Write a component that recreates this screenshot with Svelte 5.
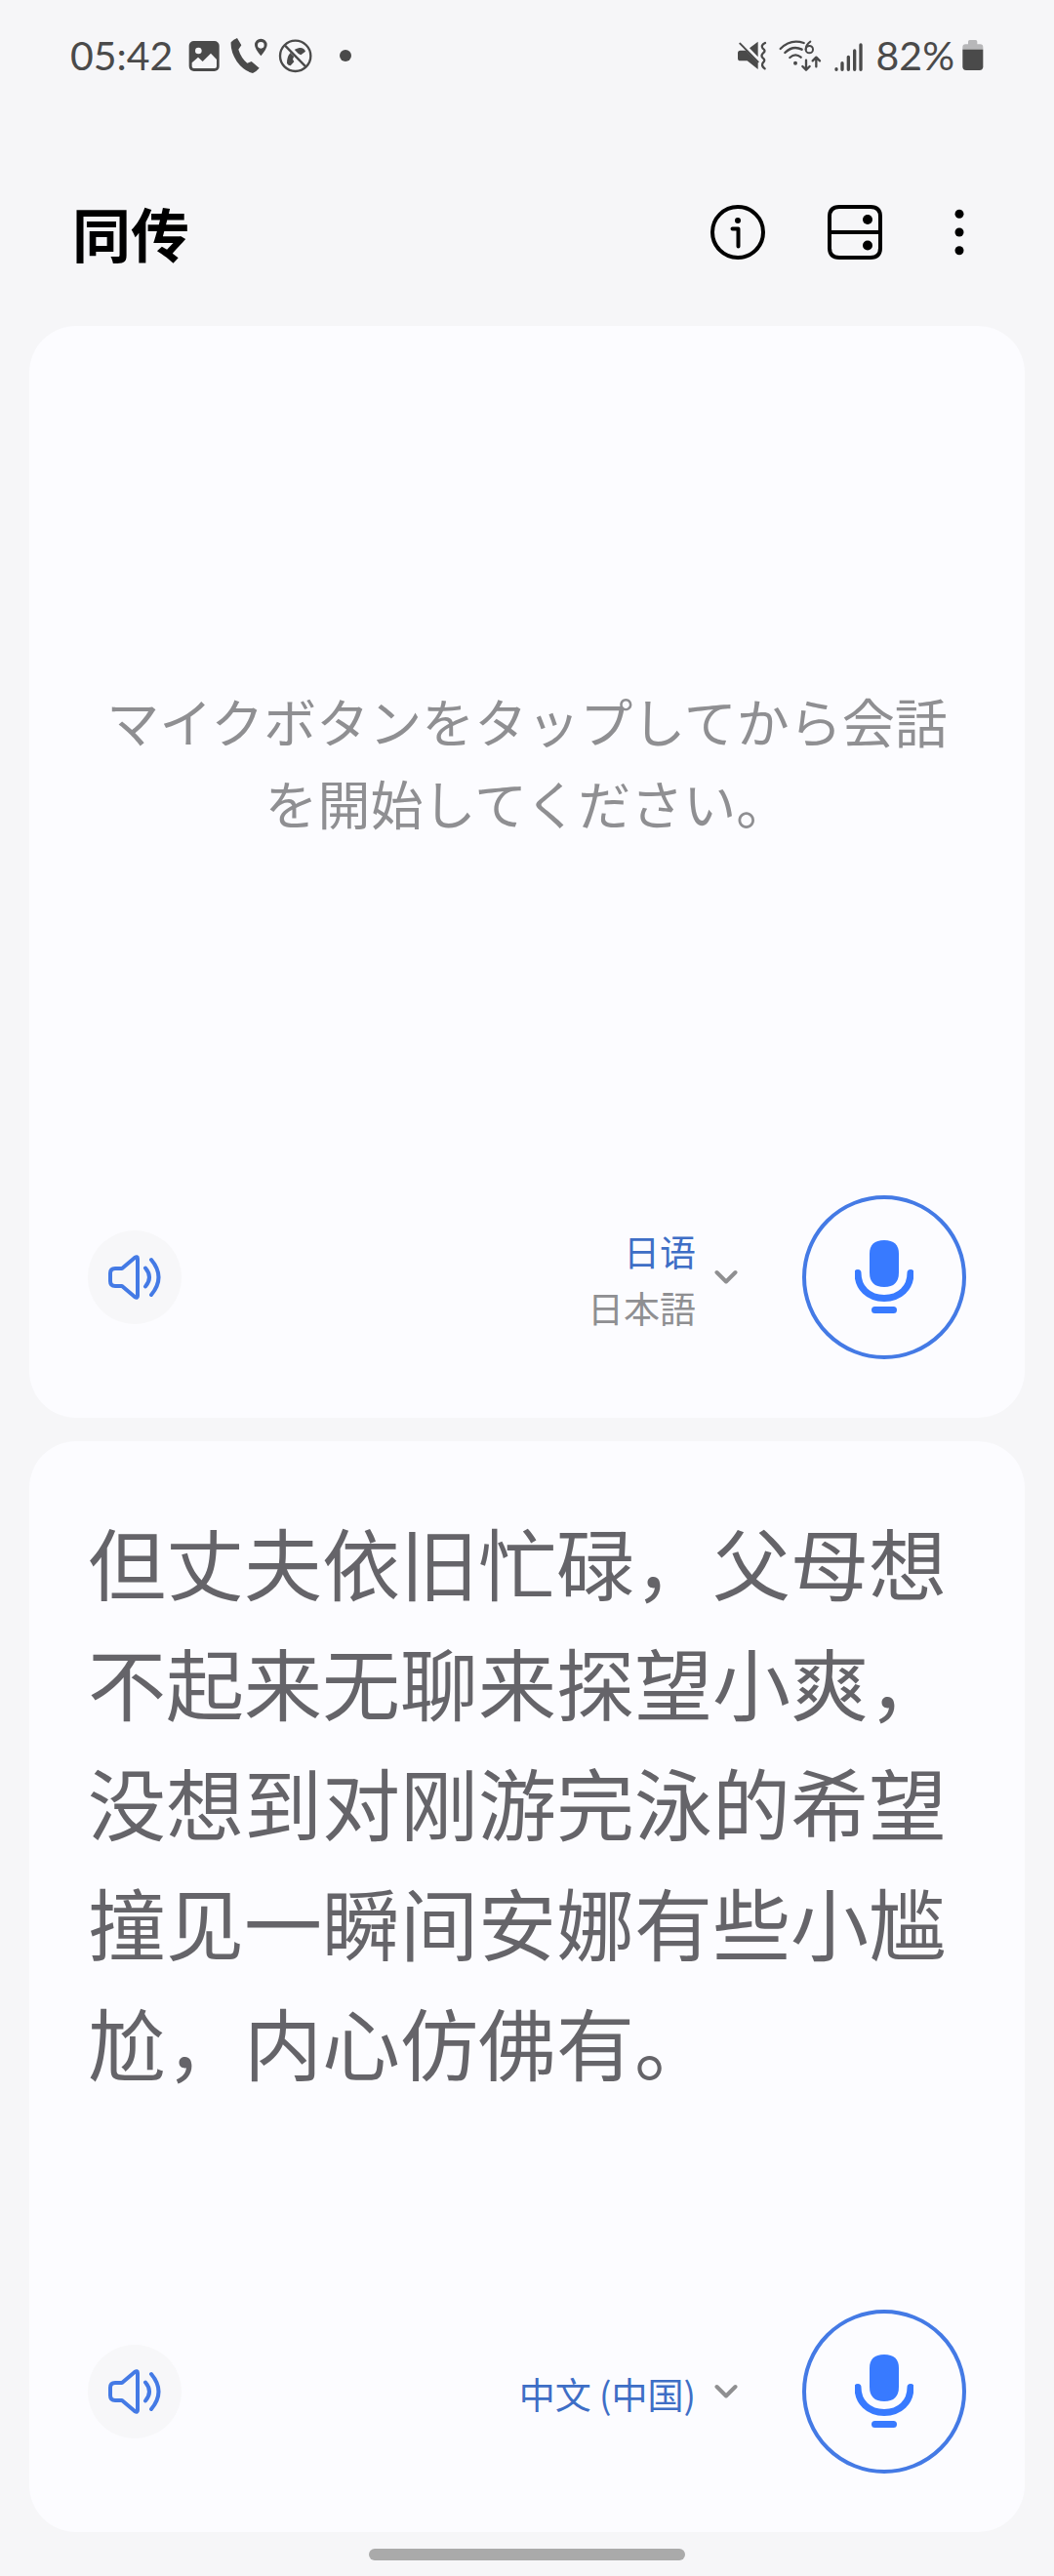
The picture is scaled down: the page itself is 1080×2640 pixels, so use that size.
<script>
    const panels = [
        {
            id: "guest",
            lang: "ja",
            text: "マイクボタンをタップしてから会話を開始してください。",
            hint: true,
            name: "日语",
            nativeName: "日本語",
        },
        {
            id: "owner",
            lang: "zh-CN",
            text: "但丈夫依旧忙碌，父母想不起来无聊来探望小爽，没想到对刚游完泳的希望撞见一瞬间安娜有些小尴尬，内心仿佛有。",
            hint: false,
            name: "中文 (中国)",
            nativeName: "",
        },
    ];

    let listening = $state("");

    const toggleMic = (id) => {
        listening = listening === id ? "" : id;
    };
</script>

<div class="screen" lang="zh-CN">
    <div class="status-bar">
        <div class="status-left">
            <span class="clock">05:42</span>
            <svg width="32" height="40" viewBox="400 51 96 120" aria-hidden="true">
                <rect x="402" y="66" width="93" height="93" rx="15" fill="currentColor" />
                <circle cx="431" cy="96" r="10" fill="#f6f6f8" />
                <path d="M411 133l19-17 14 13 25-25 18 19v21q0 6-6 6h-64q-6 0-6-6z" fill="#f6f6f8" />
            </svg>
            <svg width="40" height="40" viewBox="528 51 120 120" aria-hidden="true">
                <path d="M533 70q8-9 19-13l13 22-9 13q8 26 27 42l13-5 24 20q-9 11-20 16-28-7-49-36-20-31-18-59z" fill="currentColor" />
                <path fill-rule="evenodd" d="M625 59a19 19 0 0 1 19 19q0 11-19 34-19-23-19-34a19 19 0 0 1 19-19zm0 10a10 10 0 1 0 0 20 10 10 0 0 0 0-20z" fill="currentColor" />
            </svg>
            <svg width="36" height="40" viewBox="677 51 108 120" aria-hidden="true">
                <path d="M704 135q-1-38 38-48 14-2 19 11l-14 11-9-4q-12 4-16 17l4 8-11 12q-7 0-11-7z" fill="currentColor" />
                <path d="M700 76l66 68" stroke="#f6f6f8" stroke-width="16" />
                <circle cx="730" cy="112" r="47" fill="none" stroke="currentColor" stroke-width="7" />
                <path d="M698 80l64 65" stroke="currentColor" stroke-width="7" />
            </svg>
            <span class="more-dot"></span>
        </div>

        <div class="status-right">
            <svg width="30" height="40" viewBox="75 51 90 120" aria-hidden="true">
                <path d="M75 103q0-8 8-8h17l37 38v20l-33-26H83q-8 0-8-8zM111 88l26-20v47z" fill="currentColor" />
                <path d="M82 74l55 56" stroke="currentColor" stroke-width="6" stroke-linecap="round" />
                <path d="M159 72q-15 8-7 17 10 7 2 13-10 9-2 16 9 7 1 14-8 9 5 19" fill="none" stroke="currentColor" stroke-width="7" stroke-linecap="round" />
            </svg>
            <svg width="44" height="40" viewBox="207 51 132 120" aria-hidden="true">
                <g fill="none" stroke="currentColor" stroke-width="7" stroke-linecap="round" stroke-linejoin="round">
                    <path d="M212 90q31-32 72-18M226 102q24-24 52-10M241 117q17-15 34-1" />
                    <circle cx="301" cy="92" r="11" stroke-width="6" />
                    <path d="M304 68q-14 10-14 24" stroke-width="6" />
                    <path d="M291 125v29m-11-10l11 11 11-11M322 145v-28m-11 10l11-11 11 11" />
                </g>
                <circle cx="258" cy="134" r="6" fill="currentColor" />
            </svg>
            <svg width="32" height="40" viewBox="370 51 96 120" aria-hidden="true">
                <path d="M379 152v2M397 134v20M416 115v39M435 96v58M454 78v76" stroke="currentColor" stroke-width="10" stroke-linecap="round" />
            </svg>
            <span class="battery-level">82%</span>
            <svg width="22" height="40" viewBox="770 51 66 120" aria-hidden="true">
                <path d="M771 93v-8q0-9 9-9h8v-8q0-5 5-5h18q5 0 5 5v8h9q9 0 9 9v8z" fill="#b7b7b9" />
                <path d="M771 92h63v53q0 11-11 11h-41q-11 0-11-11z" fill="currentColor" />
            </svg>
        </div>
    </div>

    <header>
        <h1>同传</h1>
        <div class="actions">
            <button class="icon-button" aria-label="信息">
                <svg width="56" height="56" viewBox="0 0 56 56" fill="none" stroke="currentColor" stroke-linecap="round">
                    <circle cx="28" cy="28" r="26" stroke-width="4" />
                    <path d="M22.500 24.500h6v18" stroke-width="4" stroke-linejoin="round" />
                    <circle cx="28" cy="16" r="3" fill="currentColor" stroke="none" />
                </svg>
            </button>
            <button class="icon-button" aria-label="切换视图">
                <svg width="56" height="56" viewBox="0 0 56 56">
                    <path d="M2 12Q2 2 12 2h32q10 0 10 10v32q0 10-10 10H12Q2 54 2 44zM2 28h52" fill="none" stroke="currentColor" stroke-width="4" />
                    <circle cx="41" cy="15" r="5" fill="currentColor" />
                    <circle cx="41" cy="41.500" r="5" fill="currentColor" />
                </svg>
            </button>
            <button class="icon-button" aria-label="更多选项">
                <svg width="30" height="56" viewBox="0 0 30 56" fill="currentColor">
                    <circle cx="15" cy="9.300" r="4.500" />
                    <circle cx="15" cy="28" r="4.500" />
                    <circle cx="15" cy="46.700" r="4.500" />
                </svg>
            </button>
        </div>
    </header>

    <main>
        {#each panels as panel (panel.id)}
            <section class="panel">
                <div class="content" class:hint={panel.hint}>
                    <p lang={panel.lang}>{panel.text}</p>
                </div>
                <div class="controls">
                    <button class="speaker" aria-label="朗读">
                        <svg width="56" height="48" viewBox="0 0 56 48" fill="none" stroke="currentColor" stroke-width="4" stroke-linecap="round" stroke-linejoin="round">
                            <path d="M3 20q0-5 5-5h7L28 4q3-2 3 1v38q0 3-3 1L15 33H8q-5 0-5-5z" />
                            <path d="M39 14.500q8 9.500 0 19M45 6q15 18 0 36" />
                        </svg>
                    </button>
                    <button class="language" aria-haspopup="listbox">
                        <span class="names">
                            <span>{panel.name}</span>
                            {#if panel.nativeName}
                                <span class="native" lang={panel.lang}>{panel.nativeName}</span>
                            {/if}
                        </span>
                        <svg width="24" height="16" viewBox="0 0 24 16" fill="none" stroke="#8f8f91" stroke-width="4" stroke-linecap="round" stroke-linejoin="round" aria-hidden="true">
                            <path d="M2.500 3l9.500 9.500L21.500 3" />
                        </svg>
                    </button>
                    <button
                        class="mic"
                        aria-label="麦克风"
                        aria-pressed={listening === panel.id}
                        onclick={() => toggleMic(panel.id)}
                    >
                        <svg width="60" height="76" viewBox="0 0 60 76">
                            <path d="M15 14Q15 0 30 0t15 14v19q0 15-15 15T15 33z" fill="currentColor" />
                            <path d="M3 33.500C3 49 14 59.500 30 59.500S57 49 57 33.500M20.500 71.500h19" fill="none" stroke="currentColor" stroke-width="7" stroke-linecap="round" />
                        </svg>
                    </button>
                </div>
            </section>
        {/each}
    </main>

    <footer>
        <span class="home-bar"></span>
    </footer>
</div>

<style>
    :global(body) {
        background-color: #f6f6f8;
    }

    .screen {
        display: flex;
        flex-direction: column;
        box-sizing: border-box;
        min-height: 100vh;
        background-color: #f6f6f8;
        color: black;
        font-family: "Noto Sans CJK SC", sans-serif;
    }

    svg {
        display: block;
        flex: none;
    }

    button {
        display: flex;
        align-items: center;
        justify-content: center;
        margin: 0;
        padding: 0;
        border: none;
        background: none;
        color: inherit;
        font: inherit;
        cursor: pointer;
    }

    .status-bar {
        display: flex;
        align-items: center;
        justify-content: space-between;
        height: 114px;
        padding: 0 72px;
        color: #4a4a4a;
        font-family: Lato, sans-serif;
        font-size: 41px;
        line-height: 48px;
    }

    .status-left,
    .status-right {
        display: flex;
        align-items: center;
    }

    .status-left {
        gap: 10px;
    }

    .status-right {
        gap: 12px;
    }

    .clock {
        min-width: 111px;
    }

    .battery-level {
        margin-right: -4px;
    }

    .more-dot {
        width: 12px;
        height: 12px;
        margin-left: 17px;
        border-radius: 50%;
        background-color: currentColor;
    }

    header {
        display: flex;
        align-items: center;
        justify-content: space-between;
        box-sizing: border-box;
        height: 220px;
        padding: 28px 82px 0 74px;
    }

    h1 {
        margin: 0;
        font-size: 60px;
        font-weight: 700;
        line-height: 84px;
    }

    .actions {
        display: flex;
        gap: 64px;
    }

    main {
        display: flex;
        flex: 1;
        flex-direction: column;
        gap: 24px;
        padding: 0 30px;
    }

    .panel {
        display: flex;
        flex: 1 1 0;
        flex-direction: column;
        padding: 0 60px 60px;
        border-radius: 48px;
        background-color: #fcfcff;
    }

    .content {
        flex: 1;
        padding-top: 61px;
        color: #656469;
        font-size: 80px;
        line-height: 123px;
    }

    .content.hint {
        display: flex;
        align-items: center;
        justify-content: center;
        padding-top: 4px;
        color: #8f8f92;
        font-family: "Noto Sans CJK JP", sans-serif;
        font-size: 54px;
        line-height: 84px;
        text-align: center;
    }

    p {
        margin: 0;
    }

    .controls {
        display: flex;
        align-items: center;
    }

    .speaker {
        width: 96px;
        height: 96px;
        border-radius: 50%;
        background-color: #f7f7f9;
        color: #447ae5;
    }

    .language {
        gap: 19px;
        margin-right: 66px;
        margin-left: auto;
        color: #3e6ec6;
        font-size: 37px;
        line-height: 58px;
    }

    .names {
        display: flex;
        flex-direction: column;
        align-items: flex-end;
        padding-top: 4px;
    }

    .native {
        color: #8f8f92;
        font-family: "Noto Sans CJK JP", sans-serif;
    }

    .mic {
        box-sizing: border-box;
        width: 168px;
        height: 168px;
        border: 4px solid #447ae5;
        border-radius: 50%;
        color: #387aff;
    }

    footer {
        display: flex;
        justify-content: center;
        padding: 17px 0 16px;
    }

    .home-bar {
        width: 30%;
        height: 12px;
        border-radius: 6px;
        background-color: #aaaaaa;
    }
</style>
